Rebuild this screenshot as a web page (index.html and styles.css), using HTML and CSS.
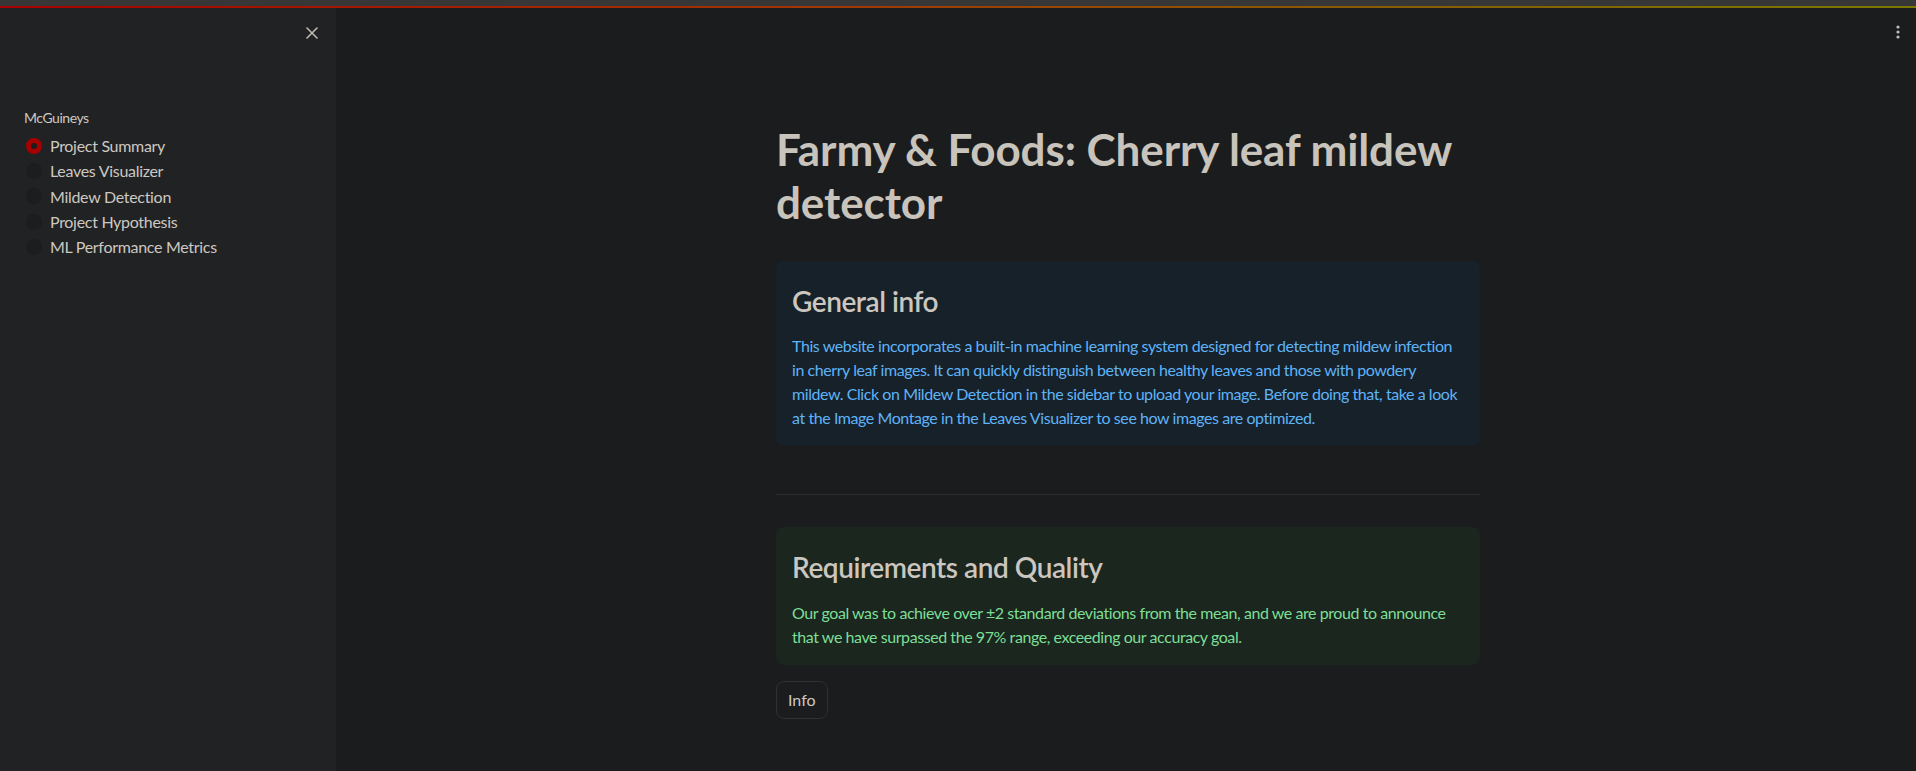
FILE: index.html
```html
<!DOCTYPE html>
<html lang="en">
<head>
<meta charset="utf-8">
<title>Farmy &amp; Foods</title>
<link rel="stylesheet" href="styles.css">
</head>
<body>
<div class="top-strip"></div>
<div class="decoration"></div>
<div class="app">
  <aside class="sidebar">
    <div class="sidebar-header">
      <button class="close-btn" aria-label="Close sidebar">
        <svg width="12" height="12" viewBox="0 0 12 12"><path d="M1 1 L11 11 M11 1 L1 11" stroke="currentColor" stroke-width="1.6" stroke-linecap="round"/></svg>
      </button>
    </div>
    <nav class="nav">
      <div class="nav-label">McGuineys</div>
      <div class="radio-group">
        <label class="radio checked"><span class="dot"></span><span class="radio-text">Project Summary</span></label>
        <label class="radio"><span class="dot"></span><span class="radio-text">Leaves Visualizer</span></label>
        <label class="radio"><span class="dot"></span><span class="radio-text">Mildew Detection</span></label>
        <label class="radio"><span class="dot"></span><span class="radio-text">Project Hypothesis</span></label>
        <label class="radio"><span class="dot"></span><span class="radio-text">ML Performance Metrics</span></label>
      </div>
    </nav>
  </aside>
  <main class="main">
    <button class="menu-btn" aria-label="Main menu">
      <svg width="4" height="14" viewBox="0 0 4 14"><circle cx="2" cy="2" r="1.6" fill="currentColor"/><circle cx="2" cy="7" r="1.6" fill="currentColor"/><circle cx="2" cy="12" r="1.6" fill="currentColor"/></svg>
    </button>
    <div class="block">
      <h1 class="title">Farmy &amp; Foods: Cherry leaf mildew detector</h1>
      <div class="alert alert-info">
        <h3 class="alert-heading">General info</h3>
        <p class="alert-text">This website incorporates a built-in machine learning system designed for detecting mildew infection in cherry leaf images. It can quickly distinguish between healthy leaves and those with powdery mildew. Click on Mildew Detection in the sidebar to upload your image. Before doing that, take a look at the Image Montage in the Leaves Visualizer to see how images are optimized.</p>
      </div>
      <hr class="divider">
      <div class="alert alert-success">
        <h3 class="alert-heading">Requirements and Quality</h3>
        <p class="alert-text">Our goal was to achieve over ±2 standard deviations from the mean, and we are proud to announce that we have surpassed the 97% range, exceeding our accuracy goal.</p>
      </div>
      <div class="btn-row"><button class="btn">Info</button></div>
    </div>
  </main>
</div>
</body>
</html>
```

FILE: styles.css
```css
* { box-sizing: border-box; }
html, body {
  margin: 0;
  padding: 0;
  height: 100%;
  overflow: hidden;
  background: #1b1c1e;
  font-family: "Source Sans Pro", "Lato", "Liberation Sans", sans-serif;
  color: #cdc8c1;
}
.top-strip { height: 6px; background: #373737; }
.decoration {
  height: 2px;
  background: linear-gradient(90deg, #a80000 0%, #a03a00 45%, #8a5a00 70%, #7a7800 100%);
}
.app {
  display: flex;
  height: calc(100% - 8px);
}
.sidebar {
  width: 336px;
  flex: 0 0 336px;
  background: #212224;
  display: flex;
  flex-direction: column;
}
.sidebar-header {
  display: flex;
  justify-content: flex-end;
  padding: 9px 8px 0 0;
  height: 99px;
}
.close-btn {
  width: 32px;
  height: 32px;
  display: flex;
  align-items: center;
  justify-content: center;
  background: transparent;
  border: none;
  color: #bdb8b0;
  padding: 0;
  cursor: pointer;
}
.nav { padding: 0 24px; }
.nav-label {
  font-size: 14px;
  line-height: 21px;
  height: 21px;
  margin-bottom: 5px;
  letter-spacing: -0.45px;
  color: #cdc8c1;
}
.radio-group { display: flex; flex-direction: column; }
.radio {
  display: flex;
  align-items: center;
  gap: 8px;
  font-size: 16px;
  line-height: 25.3px;
  height: 25.3px;
  letter-spacing: -0.3px;
  color: #cdc8c1;
}
.dot {
  width: 16px;
  height: 16px;
  border-radius: 50%;
  background: #1c1d1f;
  margin-left: 2px;
  flex: 0 0 16px;
}
.radio.checked .dot {
  background: #1c1d1f;
  border: 5px solid #a60000;
}
.main {
  flex: 1;
  position: relative;
  display: flex;
  justify-content: center;
  padding-left: 4px;
}
.menu-btn {
  position: absolute;
  top: 14px;
  right: 8px;
  width: 20px;
  height: 20px;
  display: flex;
  align-items: center;
  justify-content: center;
  background: transparent;
  border: none;
  color: #c2bdb5;
  padding: 0;
}
.block {
  width: 704px;
  padding-top: 95px;
  display: flex;
  flex-direction: column;
  gap: 16px;
}
.title {
  margin: 0;
  padding: 20px 0 16px;
  font-size: 44px;
  line-height: 52.8px;
  font-weight: 700;
  letter-spacing: -0.1px;
  color: #c8c3bb;
}
.alert {
  border-radius: 8px;
  padding: 16px;
}
.alert-info { background: #17212a; }
.alert-success { background: #1b261f; }
.alert-heading {
  margin: 0 0 16px;
  padding-top: 8px;
  font-size: 28px;
  line-height: 33.6px;
  font-weight: 600;
  letter-spacing: -0.45px;
  color: #cbc6bf;
}
.alert-text {
  margin: 0;
  font-size: 16px;
  line-height: 24px;
  letter-spacing: -0.43px;
}
.alert-info .alert-text { color: #5fb3f7; }
.alert-success .alert-text { color: #7ddf96; }
.divider {
  margin: 32px 0 16px;
  border: none;
  height: 1px;
  background: #2c2d30;
}
.btn-row { display: flex; }
.btn {
  height: 38px;
  padding: 0 11px;
  border: 1px solid #2f3033;
  border-radius: 8px;
  background: #1b1c1e;
  color: #cdc8c1;
  font-family: inherit;
  font-size: 16px;
}
```
